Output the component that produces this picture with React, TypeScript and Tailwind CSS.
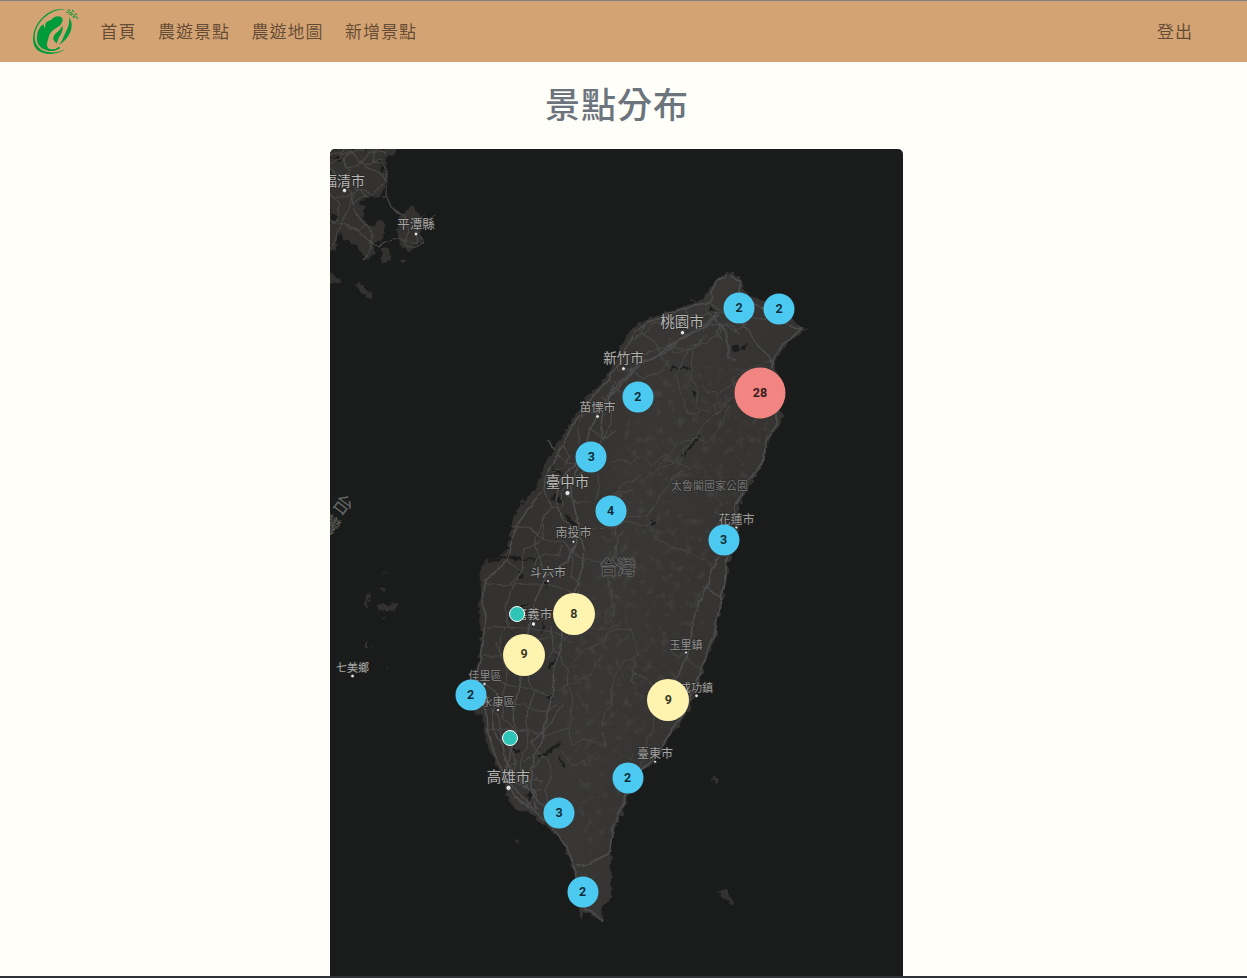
import React from "react";

const ORIGIN_X = 330;
const ORIGIN_Y = 149;

const ISLAND =
  "M730 273L738 277L742 286L743 291L751 296L765 302L778 307L790 314L794 322L800 327L806 329L801 334L790 340L780 352L774 361L775 370L782 395L781 412L782 421L775 430L768 440L766 452L762 465L756 475L748 487L742 498L738 508L738 530L734 550L729 562L726 580L722 600L717 618L716 635L710 650L703 663L702 675L696 690L690 706L684 717L676 728L667 738L658 756L650 765L640 771L630 790L622 812L612 836L610 850L611 880L610 898L602 906L601 912L604 923L595 916L585 912L581 918L578 905L577 890L575 870L567 852L562 840L555 833L543 824L530 813L517 808L508 800L505 785L500 770L490 750L484 735L483 716L475 712L469 695L474 678L479 662L482 640L479 605L482 592L480 574L486 560L500 557L508 550L511 530L515 516L525 500L537 488L545 465L556 447L565 433L577 412L590 394L605 380L615 362L622 345L632 328L650 318L668 312L690 305L705 299L709 288L718 278Z";

const MAINLAND = [
  "M330 149H399L394 155L386 157L385 166L387 178L383 190L381 197L365 198L360 201L365 209L362 217L369 226L374 226L381 219L384 226L384 235L380 241L371 244L375 250L371 261L363 254L354 243L344 239L337 231L336 247L330 252Z",
  "M399 216L408 210L411 205L415 211L423 217L424 225L419 234L422 240L410 252L400 245L398 235Z",
  "M381 248L391 247L390 260L383 264Z",
  "M369 250L377 252L372 257Z",
  "M330 273L341 280L333 284L330 283Z",
  "M356 286L362 284L367 290L373 293L371 299L363 295Z",
  "M423 214H426V216H423ZM431 215H435V217H431ZM401 260H405V262H401Z",
];

const ISLETS = [
  "M377 606L385 603L388 607L393 603L398 605L397 609L388 612L381 610Z",
  "M376 588L384 588L385 594L381 590ZM367 594L371 593L368 602L368 608L366 607ZM381 617L385 614L384 617Z",
  "M383 573L387 572L384 576ZM365 642H367V647H365ZM371 645H373V646H371ZM386 667H388V668H386Z",
  "M713 777L719 778L718 783L715 785L712 780Z",
  "M718 891L728 890L728 896L733 900L732 904L726 900L720 896Z",
  "M516 842L521 839L518 844ZM520 502L531 500L525 505ZM689 300L697 300L694 303Z",
];

const HIGHWAYS = [
  "M728 275L716 281L711 293L712 301L704 304L678 310L649 322L634 334L622 359L608 380L588 402L572 426L559 452L546 475L544 489L530 506L517 525L511 544L507 560L495 573L486 580L482 604L485 612L484 635L481 657L476 676L480 695L487 712L488 733L495 755L507 780L516 798L535 811L554 829L566 847L575 868L578 896L586 909L596 914L602 922",
  "M731 276L740 282L739 295L751 301L762 307L775 318L787 325L802 329L793 335L780 347L772 361L774 383L777 400L777 424L766 440L764 458L754 474L743 491L735 506L736 528",
  "M735 530L727 559L724 583L719 609L714 634L706 654L697 682L687 707L678 721L666 739L657 757L641 769L630 783L624 801L613 825L610 849",
  "M718 312L708 325L691 333L680 340L665 353L644 362L632 372L620 386L603 405L592 425L583 448L575 465L560 480L556 500L562 518L576 530L577 543L566 562L545 578L535 603L527 631L524 656L520 685L514 708L515 737L507 765L511 784L522 797L536 809",
  "M720 315L710 320L700 328L685 337L669 346L657 357L639 363L628 374L614 389L603 409L601 427L602 436",
  "M581 449L577 470L570 483L573 499L577 520L584 549L581 573L572 599L561 626L561 650L553 669L554 692L547 713L542 740L533 757L531 786L537 808",
  "M714 316L725 333L728 345L728 358L736 360",
  "M740 320L752 335L759 347L770 357L772 368",
  "M720 558L711 570L708 583L702 596L695 614L692 633L687 657L679 672L672 690",
  "M703 587L714 592L722 600",
  "M611 850L600 858L590 864L577 866",
  "M562 813L548 809L539 801L534 790L522 786L515 774L505 760L501 742L493 731L493 710L497 694L486 683L481 669",
];

const ROADS = [
  "M631 340L645 333L655 322L675 319L700 315L715 312",
  "M649 320L641 333L655 342L662 356L672 369",
  "M637 361L649 351L671 346L693 350L707 334",
  "M705 304L707 314L717 320L721 332L708 342L690 347L678 371",
  "M686 310L691 320L708 325M710 302L720 310L731 317L747 323L735 331L723 325L716 332L722 339",
  "M700 316L711 312L730 314L753 318L772 320M706 324L730 325L741 333",
  "M617 370L630 370L643 379L660 372L669 360M610 385L625 394L640 389",
  "M602 397L612 405L611 424L600 443L592 452M597 413L592 430L603 438L615 431",
  "M606 380L616 382L607 397L594 412L583 414L578 428L579 444",
  "M569 434L562 445L569 456L564 468L552 471M547 478L562 482L574 478L592 467",
  "M557 455L568 463L580 465L598 460M545 490L551 507L563 508L562 490L574 481",
  "M549 508L538 530L535 545L540 563L548 577M550 507L542 519L543 540L524 550L522 570L510 584",
  "M512 525L530 529L545 541L563 541L580 558L601 561L617 557",
  "M486 584L509 585L532 584L552 584L573 594M507 560L521 571L512 590L506 606L508 624L500 639L501 659",
  "M485 628L502 627L525 628L554 632L572 642M482 656L499 656L513 648L527 650L541 638L557 636",
  "M495 642L505 662L507 681L501 698L503 717L514 730L529 733",
  "M480 674L497 679L510 686L533 689L549 695L569 684",
  "M486 700L500 701L523 704L540 713L556 705M487 731L506 729L529 731L547 735L569 728",
  "M490 709L499 715L501 739L513 754L515 773L524 784L538 778",
  "M535 690L530 705L526 722L528 746L520 760L522 779L532 793L541 790",
  "M507 766L524 761L538 753L548 759L551 775L545 790L548 802",
  "M511 780L525 788L532 781L544 781M516 797L529 806L533 796",
  "M538 733L532 743L542 757L531 770L541 784M562 705L555 718L543 732L530 742",
  "M552 626L553 648L561 658L568 673L567 686M527 655L528 675L533 691",
  "M533 569L538 557L548 553L559 556L562 545M570 549L574 559L571 577L580 585L578 600",
  "M598 474L600 484L596 500M633 489L617 493L605 502M611 563L617 544L614 529L625 517L648 516L657 502L664 493L671 478L684 471",
  "M547 440L556 450M592 529L611 528L627 521L645 526L655 519M590 502L578 503L568 495",
  "M625 530L617 538L616 557M673 697L655 689L647 679L633 673L632 680",
  "M330 154L347 154L365 149M330 163L339 159L345 149M344 157L345 168L358 166L370 153L382 151L386 155M330 178L337 174L330 168",
  "M351 151L365 166L376 170L386 181L386 196L381 196M365 165L375 161L383 165L387 172L383 183L373 194L359 190L347 197L331 197",
  "M386 195L391 207L404 216L409 226L405 243L408 248L424 243L418 232L417 243L400 238L385 242L379 247L367 239L355 228L343 224L330 222",
  "M350 152L343 160L349 172L343 180L353 196L348 209L340 225L334 243L330 252M353 196L354 210L362 220L372 234L370 252L363 260M354 187L366 196L352 203",
  "M330 193L340 205L338 218L332 223M376 149L373 161L381 159M356 213L362 220M343 226L356 230L365 225",
];

const COUNTY_LINES = [
  "M669 338L673 352L692 350L691 378L698 392L696 407L706 411L714 405L717 415L736 394L733 378L747 370L772 360",
  "M608 463L621 460L632 464L637 457L645 459L651 467L663 456L672 452L677 443L697 438L706 443L718 431L730 407",
  "M677 378L684 405L689 414L702 411M702 384L708 392L719 393L733 385",
  "M601 567L609 580L612 603L610 618L615 626L599 631L582 624L574 628L560 644L548 658",
  "M573 664L584 650L602 642L611 630L631 628L635 641L639 655L625 662L616 674L611 690L612 705L606 711L602 731L605 746L584 740L572 744L569 733L573 699L569 687L580 680L590 674L603 653",
  "M560 750L573 766L584 761L586 767M655 701L653 732L647 737L646 755L639 768M687 652L678 657L671 650M688 662L700 668",
  "M618 490L627 480L642 482L656 470L677 462L691 469M648 527L658 540L680 549L707 561",
  "M676 470L683 454L691 443L706 422L722 409M657 468L664 460L675 462",
  "M637 477L629 485M628 666L634 674L631 679L637 684M606 619L608 609L615 604L613 618",
];

const WATER = [
  "M732 347L738 344L739 348L748 343L744 350L740 348L737 353L733 351Z",
  "M670 367L689 367L688 370L674 368L671 371Z",
  "M677 461L687 449L699 434L700 436L688 452Z",
  "M602 561L615 562L614 565L603 563ZM652 520L655 518L654 528L652 525ZM692 392L697 391L696 399Z",
  "M549 666L558 653L555 664L548 671ZM547 697L556 688L550 700ZM512 612L520 606L528 603L517 613L507 622Z",
  "M536 758L547 751L562 740L553 752L544 757ZM559 756L568 768L563 766L557 757Z",
  "M487 559L512 556L530 558L541 562L531 560L510 559L488 562ZM521 569L523 575L518 579L521 574Z",
  "M560 450L570 457L563 452ZM552 467L565 475L554 472ZM566 605L560 617L557 619ZM545 583L552 578L546 590Z",
  "M514 749L519 750L515 754L513 751ZM544 622L542 634L540 629ZM526 795L534 786L529 804ZM710 306L716 310L710 313Z",
  "M565 513L579 526L570 525ZM558 490L550 499L563 504ZM333 153L342 160L338 162ZM330 213L339 217L336 226L331 218ZM379 157L384 169L381 174Z",
];

type Label = {
  text: string;
  x: number;
  y: number;
  size: number;
  fill: string;
  dot?: [number, number, number];
};

const LABELS: Label[] = [
  { text: "福清市", x: 344, y: 185.5, size: 13.8, fill: "#b5b5b4", dot: [344.5, 190.5, 2.2] },
  { text: "平潭縣", x: 416, y: 229, size: 12.5, fill: "#a9a9a8", dot: [416, 234, 1.9] },
  { text: "桃園市", x: 682, y: 326.5, size: 14.5, fill: "#b5b5b4", dot: [682.5, 332.7, 2.2] },
  { text: "新竹市", x: 623.5, y: 363, size: 13.5, fill: "#b0b0af", dot: [623.5, 368.7, 2] },
  { text: "苗慄市", x: 597.5, y: 411.5, size: 12, fill: "#a7a7a6", dot: [597.5, 416.5, 1.9] },
  { text: "臺中市", x: 567.5, y: 487, size: 14.5, fill: "#b8b8b7", dot: [567.5, 493, 2.6] },
  { text: "南投市", x: 573.5, y: 537, size: 12, fill: "#9f9f9e", dot: [573.5, 541.7, 1.5] },
  { text: "斗六市", x: 548, y: 576.5, size: 12, fill: "#9f9f9e", dot: [548, 581, 1.5] },
  { text: "嘉義市", x: 533.5, y: 619, size: 12.5, fill: "#a5a5a4", dot: [533.5, 624, 2.2] },
  { text: "佳里區", x: 485, y: 680, size: 11, fill: "#8d8d8c", dot: [484.5, 684, 1.7] },
  { text: "永康區", x: 498, y: 706, size: 11, fill: "#969695", dot: [498, 710, 1.5] },
  { text: "高雄市", x: 508.5, y: 782, size: 14.5, fill: "#b2b2b1", dot: [508.5, 787.8, 2.6] },
  { text: "花蓮市", x: 736.5, y: 523.5, size: 12, fill: "#9b9b9a", dot: [736.3, 527.5, 1.5] },
  { text: "玉里鎮", x: 686, y: 648.5, size: 11, fill: "#969695", dot: [686, 652.5, 1.5] },
  { text: "成功鎮", x: 696.5, y: 692, size: 11, fill: "#a0a09f", dot: [696.5, 695.8, 1.8] },
  { text: "臺東市", x: 655, y: 757.5, size: 12, fill: "#a2a2a1", dot: [655, 761.7, 1.5] },
  { text: "七美鄉", x: 352.5, y: 672, size: 11, fill: "#a8a8a7", dot: [352.5, 676, 1.8] },
  { text: "太魯閣國家公園", x: 709.5, y: 490, size: 11, fill: "#777776" },
];

type Cluster = { x: number; y: number; count: number };

const CLUSTERS: Cluster[] = [
  { x: 739, y: 308, count: 2 },
  { x: 779, y: 309, count: 2 },
  { x: 760, y: 393, count: 28 },
  { x: 637.8, y: 397, count: 2 },
  { x: 591.3, y: 457, count: 3 },
  { x: 610.5, y: 510.5, count: 4 },
  { x: 723.5, y: 539.5, count: 3 },
  { x: 573.8, y: 614, count: 8 },
  { x: 524, y: 654.5, count: 9 },
  { x: 470.5, y: 695, count: 2 },
  { x: 668.3, y: 700.3, count: 9 },
  { x: 627.5, y: 778, count: 2 },
  { x: 559, y: 812.5, count: 3 },
  { x: 582.5, y: 892, count: 2 },
];

const SPOTS: [number, number][] = [
  [516.5, 613.5],
  [509.7, 738.2],
];

function clusterStyle(count: number) {
  if (count >= 10) return "size-[51px] bg-[#f28482]";
  if (count >= 5) return "size-[42px] bg-[#fff3b0]";
  return "size-[31px] bg-[#4cc9f0]";
}

function Logo() {
  return (
    <svg className="h-[62px] w-[70px]" viewBox="0 0 210 186" fill="#009b3a" aria-hidden="true">
      <g transform="translate(30 18)">
        <path d="M110 11C84 5 57 16 37 35C17 54 6 82 10 109C13 130 32 145 62 144C80 143 94 138 107 128C93 135 77 141 60 139C29 136 14 117 14 92C14 65 33 39 58 23C75 13 91 10 110 11Z" />
        <path d="M47 52C53 42 62 46 65 40C73 31 86 28 94 34C101 40 98 50 90 58C81 66 73 67 66 76C56 85 57 95 52 107C49 117 51 123 57 128C68 132 80 129 87 122L91 126C78 137 56 138 42 130C25 122 19 107 21 92C22 75 29 62 40 55L45 68C47 60 44 59 47 52Z" />
        <path d="M97 58C100 70 96 80 91 88C84 96 85 104 79 113C77 107 69 105 70 97C70 81 91 78 97 58Z" />
        <path d="M117 34C131 51 125 77 112 94C104 105 96 112 87 117C96 106 97 101 103 88C111 69 120 58 117 34Z" />
        <path d="M106 12L117 18L128 25L137 33L143 39L135 28L124 19Z" />
        <path d="M113 10Q119 8 122 14Q116 16 113 10ZM125 11Q132 10 132 18Q126 18 125 11ZM134 20Q141 20 142 28Q136 27 134 20ZM108 17Q115 16 117 23Q111 23 108 17ZM117 23Q124 21 127 28Q120 30 117 23ZM127 31Q133 28 136 35Q130 37 127 31ZM138 31Q145 32 145 40Q140 38 138 31Z" />
      </g>
    </svg>
  );
}

function NavLink({ children }: { children: React.ReactNode }) {
  return (
    <a href="#" className="text-[17px] leading-6 tracking-[1px] text-black/55">
      {children}
    </a>
  );
}

function BaseMap() {
  return (
    <svg className="block h-full w-full" viewBox="330 149 573 827" fontFamily='"Noto Sans CJK TC", sans-serif'>
      <defs>
        <filter id="coast" x="0" y="0" width="1" height="1" colorInterpolationFilters="sRGB">
          <feTurbulence type="fractalNoise" baseFrequency="0.16" numOctaves="3" seed="4" />
          <feDisplacementMap in="SourceGraphic" scale="7" xChannelSelector="R" yChannelSelector="G" />
        </filter>
        <filter id="roads" x="0" y="0" width="1" height="1" colorInterpolationFilters="sRGB">
          <feTurbulence type="fractalNoise" baseFrequency="0.09" numOctaves="2" seed="8" />
          <feDisplacementMap in="SourceGraphic" scale="5" xChannelSelector="R" yChannelSelector="G" />
        </filter>
        <filter id="relief" x="0" y="0" width="1" height="1" colorInterpolationFilters="sRGB">
          <feTurbulence type="fractalNoise" baseFrequency="0.13 0.11" numOctaves="3" seed="11" />
          <feColorMatrix values="0 0 0 0 0.33  0 0 0 0 0.33  0 0 0 0 0.32  3.6 0 0 0 -1.9" />
        </filter>
        <clipPath id="island">
          <path d={ISLAND} />
        </clipPath>
        <linearGradient id="mountains" x1="480" y1="500" x2="720" y2="560" gradientUnits="userSpaceOnUse">
          <stop offset="0.25" stopColor="#383735" stopOpacity="0" />
          <stop offset="0.6" stopColor="#383736" />
          <stop offset="1" stopColor="#353432" />
        </linearGradient>
        <mask id="highlands">
          <path d="M650 385L690 365L765 370L770 440L735 500L715 590L690 660L640 740L605 830L590 860L570 780L560 690L590 610L600 500L620 430Z" fill="#fff" />
        </mask>
      </defs>
      <rect x="330" y="149" width="573" height="827" fill="#1a1c1b" />
      <g filter="url(#coast)">
        <rect x="330" y="149" width="573" height="827" fill="none" />
        <g fill="#343230">
          {MAINLAND.map((d) => <path key={d} d={d} />)}
          {ISLETS.map((d) => <path key={d} d={d} />)}
          <path d={ISLAND} stroke="#343230" strokeWidth="1" />
        </g>
        <path d={ISLAND} fill="url(#mountains)" />
        <g fill="#1b1c1b">
          {WATER.map((d) => <path key={d} d={d} />)}
        </g>
      </g>
      <g clipPath="url(#island)">
        <g mask="url(#highlands)">
          <rect x="450" y="260" width="370" height="670" filter="url(#relief)" opacity="0.35" />
        </g>
      </g>
      <g filter="url(#roads)" fill="none" strokeLinejoin="round">
        <rect x="330" y="149" width="573" height="827" />
        <g stroke="#4b4b4a" strokeWidth="0.8">
          {COUNTY_LINES.map((d) => <path key={d} d={d} />)}
        </g>
        <g stroke="#484847" strokeWidth="1.2">
          {ROADS.map((d) => <path key={d} d={d} />)}
        </g>
        <g stroke="#4c4c4c" strokeWidth="1.6">
          {HIGHWAYS.map((d) => <path key={d} d={d} />)}
        </g>
      </g>
      <text x="617.5" y="574" textAnchor="middle" fontSize="18" fontWeight="500" fill="#343433" stroke="#646463" strokeWidth="1.6" paintOrder="stroke">
        台灣
      </text>
      <g fontSize="20" fill="#626362">
        <text textAnchor="middle" transform="translate(343 505) rotate(38)" y="7">台</text>
        <text textAnchor="middle" transform="translate(330 524) rotate(38)" y="7">灣</text>
      </g>
      {LABELS.map((label) => (
        <g key={label.text}>
          <text
            x={label.x}
            y={label.y}
            textAnchor="middle"
            fontSize={label.size}
            fill={label.fill}
            stroke="#252524"
            strokeWidth="1.2"
            paintOrder="stroke"
          >
            {label.text}
          </text>
          {label.dot && (
            <circle cx={label.dot[0]} cy={label.dot[1]} r={label.dot[2]} fill="#e5e5e5" stroke="#222" strokeWidth="0.8" />
          )}
        </g>
      ))}
    </svg>
  );
}

export default function App() {
  return (
    <div className="flex h-[978px] flex-col overflow-hidden border-b-2 border-[#303237] bg-[#fffef9] font-['Noto_Sans_CJK_TC',sans-serif]">
      <header className="flex h-[62px] shrink-0 items-center border-t border-[#808085] bg-[#d4a373] pr-[54px] pb-0.5 pl-5">
        <a href="#" className="shrink-0">
          <Logo />
        </a>
        <nav className="ml-[10.5px] flex flex-1 items-center gap-[21.5px]">
          <NavLink>首頁</NavLink>
          <NavLink>農遊景點</NavLink>
          <NavLink>農遊地圖</NavLink>
          <NavLink>新增景點</NavLink>
        </nav>
        <NavLink>登出</NavLink>
      </header>
      <main className="flex w-[1233px] flex-1 flex-col items-center">
        <h1 className="flex h-[87px] items-center pb-1.5 pl-px text-[35px] leading-none font-medium tracking-[1px] text-[#6c757d]">
          景點分布
        </h1>
        <section className="relative h-[827px] w-[573px] overflow-hidden rounded-t-[5px]">
          <BaseMap />
          {SPOTS.map(([x, y]) => (
            <span
              key={x}
              className="absolute size-4 -translate-1/2 rounded-full border border-white bg-[#2ec4b6]"
              style={{ left: x - ORIGIN_X, top: y - ORIGIN_Y }}
            />
          ))}
          {CLUSTERS.map(({ x, y, count }) => (
            <span
              key={`${x}-${y}`}
              className={`absolute flex -translate-1/2 items-center justify-center rounded-full font-[Roboto] text-[12.5px] font-bold text-black/80 ${clusterStyle(count)}`}
              style={{ left: x - ORIGIN_X, top: y - ORIGIN_Y }}
            >
              {count}
            </span>
          ))}
        </section>
      </main>
    </div>
  );
}
